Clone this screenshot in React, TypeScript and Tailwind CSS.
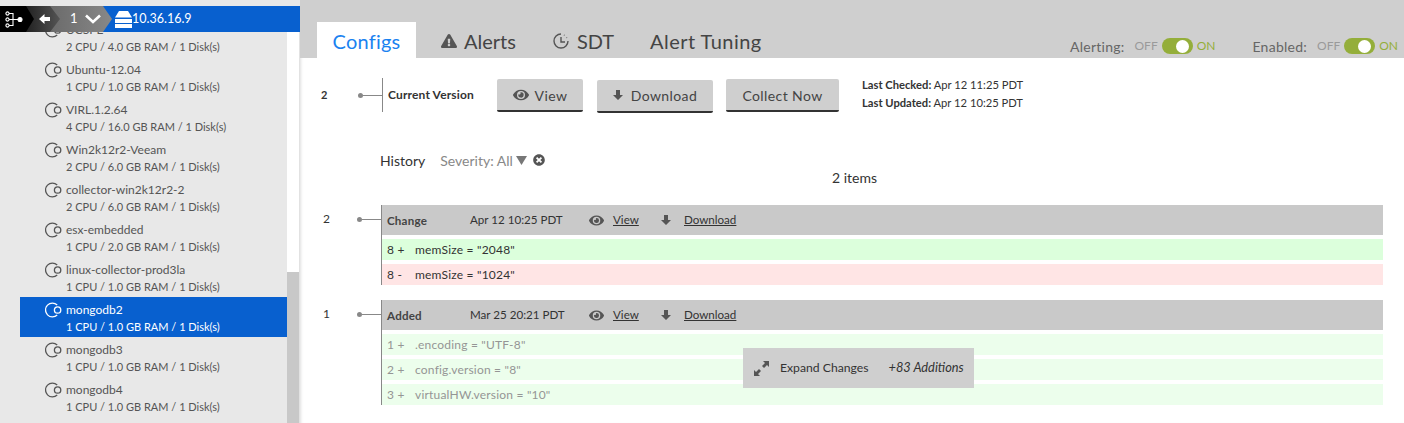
import React from 'react';
import { FaEye, FaExclamationTriangle, FaTimesCircle } from 'react-icons/fa';

const devices = [
  { name: 'UCSPE', spec: '2 CPU / 4.0 GB RAM / 1 Disk(s)' },
  { name: 'Ubuntu-12.04', spec: '1 CPU / 1.0 GB RAM / 1 Disk(s)' },
  { name: 'VIRL.1.2.64', spec: '4 CPU / 16.0 GB RAM / 1 Disk(s)' },
  { name: 'Win2k12r2-Veeam', spec: '2 CPU / 6.0 GB RAM / 1 Disk(s)' },
  { name: 'collector-win2k12r2-2', spec: '2 CPU / 6.0 GB RAM / 1 Disk(s)' },
  { name: 'esx-embedded', spec: '1 CPU / 2.0 GB RAM / 1 Disk(s)' },
  { name: 'linux-collector-prod3la', spec: '1 CPU / 1.0 GB RAM / 1 Disk(s)' },
  { name: 'mongodb2', spec: '1 CPU / 1.0 GB RAM / 1 Disk(s)', selected: true },
  { name: 'mongodb3', spec: '1 CPU / 1.0 GB RAM / 1 Disk(s)' },
  { name: 'mongodb4', spec: '1 CPU / 1.0 GB RAM / 1 Disk(s)' },
];

const VmIcon = () => (
  <svg width="17" height="16" viewBox="0 0 17 16" fill="none" stroke="currentColor" strokeWidth="1.3" className="shrink-0">
    <circle cx="12.6" cy="8" r="3.2" />
    <path d="M12.2 3A6.9 6.9 0 1 0 12.2 13" />
  </svg>
);

const DownArrow = ({ size }: { size: number }) => (
  <svg width={size} height={size} viewBox="0 0 10 10" fill="#555">
    <path d="M3 0H7V5H10L5 10 0 5H3Z" />
  </svg>
);

const Toggle = ({ label }: { label: string }) => (
  <div className="flex items-center text-[14px]">
    <span className="text-[#666] mr-[10px] tracking-[0.25px]">{label}:</span>
    <span className="text-[#9a9a9a] text-[12px] mr-[4px]">OFF</span>
    <span className="w-[31px] h-[16px] rounded-full bg-[#94ae3a] flex items-center justify-end pr-[4px]">
      <span className="w-[13px] h-[13px] rounded-full bg-white" />
    </span>
    <span className="text-[#94ae3a] text-[12px] ml-[4px]">ON</span>
  </div>
);

const Button = ({ children, className }: { children: React.ReactNode; className: string }) => (
  <div className={`h-[33px] bg-[#cfcfcf] border-b-2 border-[#333] rounded-[2px] flex items-center justify-center text-[14px] text-[#444] tracking-[0.4px] ${className}`}>
    {children}
  </div>
);

const HistoryEntry = ({ num, type, date, lines, faded }: { num: string; type: string; date: string; lines: { num: string; text: string; bg: string }[]; faded?: boolean }) => (
  <div className="flex">
    <div className="w-[81px] shrink-0 flex items-start pt-[6px]">
      <span className="text-[12px] text-[#333] ml-[23px] w-[34px] leading-[16px]">{num}</span>
      <span className="w-[5px] h-[5px] rounded-full bg-[#888] mt-[6px]" />
      <span className="flex-1 h-px bg-[#888] mt-[8px]" />
    </div>
    <div className="flex-1 border-l border-[#888]">
      <div className="h-[30px] bg-[#c9c9c9] flex items-center text-[11.6px] text-[#333]">
        <span className="font-bold text-[#444] ml-[5px] w-[83px] pt-[2px] tracking-[0.2px]">{type}</span>
        <span className="w-[119px]">{date}</span>
        <FaEye className="text-[#555] text-[15px] mr-[9px]" />
        <span className="underline w-[48px]">View</span>
        <DownArrow size={10} />
        <span className="underline ml-[13px]">Download</span>
      </div>
      <div className="flex flex-col gap-[4px] mt-[4px]">
        {lines.map((l) => (
          <div key={l.num + l.text} className={`h-[21px] flex items-center pl-[5px] text-[12px] tracking-[0.2px] ${l.bg} ${faded ? 'text-[#959595]' : 'text-[#333]'}`}>
            <span className="w-[28px]">{l.num}</span>
            {l.text}
          </div>
        ))}
      </div>
    </div>
  </div>
);

export default function App() {
  return (
    <div className="w-[1404px] h-[423px] overflow-hidden flex bg-white font-['Lato',sans-serif]">
      {/* Sidebar */}
      <div className="w-[300px] shrink-0 flex flex-col bg-[#e8e8e8]">
        <div className="h-[6px] shrink-0" />
        <div className="h-[26px] shrink-0 flex items-center bg-[#0860cf] relative z-10 text-white">
          <div className="w-[34px] h-full shrink-0 bg-black flex items-center relative z-30 pl-[5px] [clip-path:polygon(0_0,26px_0,100%_50%,26px_100%,0_100%)]">
            <svg width="18" height="17" viewBox="0 0 18 17" fill="none" stroke="white" strokeWidth="1.1">
              <circle cx="2.5" cy="2.5" r="1.6" />
              <circle cx="2.5" cy="8.5" r="1.6" />
              <circle cx="2.5" cy="14.5" r="1.6" />
              <circle cx="15" cy="8.5" r="2" fill="white" />
              <path d="M4 2.5H8V14.5H4M4 8.5H13" />
            </svg>
          </div>
          <div className="w-[34px] h-full shrink-0 -ml-[8px] bg-gradient-to-r from-[#222] to-[#555] flex items-center relative z-20 pl-[13px] [clip-path:polygon(0_0,24px_0,100%_50%,24px_100%,0_100%)]">
            <svg width="11" height="10" viewBox="0 0 11 10" fill="white"><path d="M0 5 5.5 0V3H11V7H5.5V10Z" /></svg>
          </div>
          <div className="w-[72px] h-full shrink-0 -ml-[20px] bg-gradient-to-r from-[#666] to-[#888] flex items-center relative z-10 pl-[30px] text-[13px] [clip-path:polygon(0_0,63px_0,100%_50%,63px_100%,0_100%)]">
            1
            <svg width="16" height="10" viewBox="0 0 16 10" fill="none" stroke="white" strokeWidth="2.6" className="ml-[7px]"><path d="M1 1.5 8 8 15 1.5" /></svg>
          </div>
          <svg width="17" height="17" viewBox="0 0 17 17" fill="white" className="ml-[3px]">
            <path d="M4 0H13L17 6.5H0Z" />
            <rect x="0" y="8" width="17" height="4" />
            <rect x="0" y="13" width="17" height="4" />
          </svg>
          <span className="text-[12.5px]">10.36.16.9</span>
        </div>
        <div className="flex-1 flex min-h-0">
          <div className="w-[287px] overflow-hidden">
            <div className="-mt-[15px]">
              {devices.map((d) => (
                <div key={d.name} className={`h-[40px] ml-[20px] pt-[4px] flex flex-col ${d.selected ? 'bg-[#0860cf] text-white' : 'text-[#555]'}`}>
                  <div className="flex items-center text-[12px] leading-[18px] ml-[25px]">
                    <span className="mr-[4px]"><VmIcon /></span>
                    {d.name}
                  </div>
                  <div className="text-[11px] leading-[16px] ml-[46px]">{d.spec}</div>
                </div>
              ))}
            </div>
          </div>
          <div className="w-[13px] flex flex-col border-r border-[#e2e2e2]">
            <div className="h-[240px] bg-white" />
            <div className="flex-1 bg-[#c8c8c8]" />
          </div>
        </div>
      </div>

      {/* Main */}
      <div className="flex-1 flex flex-col min-w-0 shadow-[inset_3px_0_3px_-2px_#e0e0e0]">
        <div className="h-[58px] shrink-0 bg-[#cfcfcf] flex items-end">
          <div className="ml-[17px] w-[99px] h-[36px] pt-[2px] bg-white flex items-center justify-center text-[20px] tracking-[0.2px] text-[#1a82f0]">Configs</div>
          <div className="flex items-center h-[36px] pt-[2px] text-[20px] text-[#444] ml-[25px]">
            <FaExclamationTriangle className="text-[16px] mr-[7px] text-[#555]" />
            Alerts
          </div>
          <div className="flex items-center h-[36px] pt-[2px] text-[20px] text-[#444] ml-[37px]">
            <svg width="16" height="16" viewBox="0 0 16 16" fill="none" stroke="#555" strokeWidth="1.4" className="mr-[8px]">
              <path d="M8 1A7 7 0 1 0 15 8" />
              <path d="M8 4V9H12" />
              <path d="M11 2 11.5 2.3M13.5 4.5 13.8 5" />
            </svg>
            SDT
          </div>
          <div className="flex items-center h-[36px] pt-[2px] text-[20px] tracking-[0.45px] text-[#444] ml-[36px]">Alert Tuning</div>
          <div className="ml-auto flex gap-[37px] h-[24px] items-center pr-[6px]">
            <Toggle label="Alerting" />
            <Toggle label="Enabled" />
          </div>
        </div>

        {/* Current version */}
        <div className="flex items-center h-[34px] mt-[20px] text-[#333]">
          <span className="text-[11px] font-bold ml-[21px] w-[37px]">2</span>
          <span className="w-[5px] h-[5px] rounded-full bg-[#888]" />
          <span className="w-[19px] h-px bg-[#888]" />
          <div className="w-px h-[34px] bg-[#888]" />
          <span className="text-[12px] font-bold ml-[5px] w-[109px] tracking-[0.15px] whitespace-nowrap">Current Version</span>
          <Button className="w-[86px] pt-[2px]"><FaEye className="text-[#555] text-[16px] mr-[6px]" />View</Button>
          <Button className="w-[116px] ml-[14px] mt-[2px]"><span className="mr-[8px]"><DownArrow size={10} /></span>Download</Button>
          <Button className="w-[113px] ml-[13px] pt-[2px]">Collect Now</Button>
          <div className="ml-[23px] text-[11.2px] leading-[18px] -mt-[2px]">
            <div><b>Last Checked:</b> Apr 12 11:25 PDT</div>
            <div><b>Last Updated:</b> Apr 12 10:25 PDT</div>
          </div>
        </div>

        {/* History */}
        <div className="flex items-center h-[18px] mt-[39px] ml-[80px] text-[14px]">
          <span className="text-[#333]">History</span>
          <span className="text-[#888] ml-[15px]">Severity: All</span>
          <svg width="11" height="9" viewBox="0 0 11 9" fill="#777" className="ml-[3px]"><path d="M0 0H11L5.5 9Z" /></svg>
          <FaTimesCircle className="text-[#555] text-[12px] ml-[6px]" />
        </div>
        <div className="text-center text-[14px] text-[#333] h-[18px] leading-[18px] pl-[5px]">2 items</div>
        <div className="pr-[21px] mt-[18px] relative">
          <HistoryEntry
            num="2"
            type="Change"
            date="Apr 12 10:25 PDT"
            lines={[
              { num: '8 +', text: 'memSize = "2048"', bg: 'bg-[#dcffdc]' },
              { num: '8 -', text: 'memSize = "1024"', bg: 'bg-[#ffe5e5]' },
            ]}
          />
          <div className="h-[15px]" />
          <HistoryEntry
            num="1"
            type="Added"
            date="Mar 25 20:21 PDT"
            faded
            lines={[
              { num: '1 +', text: '.encoding = "UTF-8"', bg: 'bg-[#ecfeec]' },
              { num: '2 +', text: 'config.version = "8"', bg: 'bg-[#ecfeec]' },
              { num: '3 +', text: 'virtualHW.version = "10"', bg: 'bg-[#ecfeec]' },
            ]}
          />
          <div className="absolute left-[443px] top-[143px] w-[231px] h-[40px] bg-[#cfcfcf] flex items-center text-[12.2px] text-[#333]">
            <svg width="15" height="15" viewBox="0 0 15 15" fill="#555" className="ml-[11px] mr-[11px]">
              <path d="M15 0V6L13 4 10 7 8 5 11 2 9 0Z" />
              <path d="M0 15V9L2 11 5 8 7 10 4 13 6 15Z" />
            </svg>
            <span>Expand Changes</span>
            <span className="italic ml-[20px] text-[12.8px]">+83 Additions</span>
          </div>
        </div>
      </div>
    </div>
  );
}
